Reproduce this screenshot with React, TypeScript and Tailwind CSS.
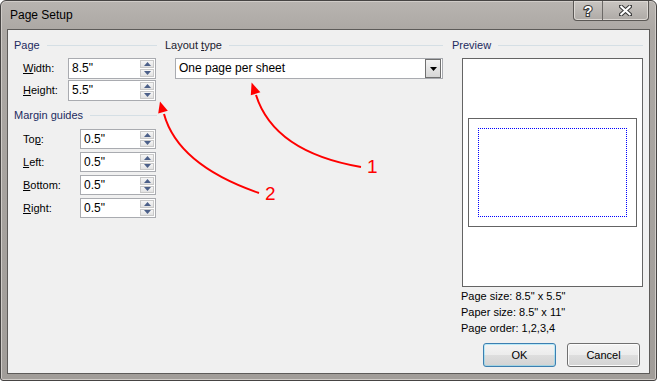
import React from "react"

function Spinner() {
  return (
    <div className="ml-auto flex h-full w-[15px] flex-col gap-px py-px pr-px">
      {["up", "down"].map((d) => (
        <div
          key={d}
          className="flex flex-1 items-center justify-center border border-[#c9c9c9] bg-[linear-gradient(#f6f6f6,#e2e2e2)]"
        >
          <svg width="7" height="4" viewBox="0 0 7 4">
            {d === "up" ? (
              <path d="M0 4 L3.5 0 L7 4 Z" fill="#4c6089" />
            ) : (
              <path d="M0 0 L3.5 4 L7 0 Z" fill="#4c6089" />
            )}
          </svg>
        </div>
      ))}
    </div>
  )
}

function Field({ value, width, height }: { value: string; width: string; height: string }) {
  return (
    <div className={`flex items-center border border-[#a9abb0] bg-white ${width} ${height}`}>
      <span className="pl-[3px] text-[12px] text-black">{value}</span>
      <Spinner />
    </div>
  )
}

function GroupHeader({ children }: { children: React.ReactNode }) {
  return (
    <div className="flex h-[15px] items-center">
      <span className="text-[#1c2b60]">{children}</span>
      <div className="ml-[7px] h-px flex-1 bg-[#d5dfe5]" />
    </div>
  )
}

function Row({
  label,
  labelWidth,
  children,
}: {
  label: React.ReactNode
  labelWidth: string
  children: React.ReactNode
}) {
  return (
    <div className="flex items-center">
      <span className={`pl-[9px] text-black ${labelWidth}`}>{label}</span>
      {children}
    </div>
  )
}

function Button({ children, primary }: { children: React.ReactNode; primary?: boolean }) {
  return (
    <div
      className={`flex h-[24px] w-[73px] items-center justify-center rounded-[3px] border text-black bg-[linear-gradient(#f4f4f4,#ececec_50%,#dedede_50%,#d3d3d3)] ${
        primary
          ? "border-[#3c7fb1] shadow-[inset_0_0_0_1px_#48d6ff55]"
          : "border-[#707070] shadow-[inset_0_0_0_1px_#fcfcfc]"
      }`}
    >
      {children}
    </div>
  )
}

export default function App() {
  const margins = [
    { label: <>To<span className="underline">p</span>:</>, value: '0.5"' },
    { label: <><span className="underline">L</span>eft:</>, value: '0.5"' },
    { label: <><span className="underline">B</span>ottom:</>, value: '0.5"' },
    { label: <><span className="underline">R</span>ight:</>, value: '0.5"' },
  ]

  return (
    <div className="relative h-[381px] w-[657px] font-['Liberation_Sans',Arial,sans-serif] text-[11px] leading-[15px]">
      <div className="flex h-full w-full flex-col rounded-t-[6px] rounded-b-[3px] border border-[#464443] bg-[linear-gradient(#b8b4b0,#aca8a4_30px,#a19d99)] shadow-[inset_0_0_0_1px_#d0ccc8]">
        {/* title bar */}
        <div className="flex h-[28px] items-start">
          <span className="pl-[9px] pt-[7px] text-[12px] text-black">Page Setup</span>
          <div className="ml-auto mr-[7px] flex h-[20px] overflow-hidden rounded-b-[4px] border border-t-0 border-[#5b5855] bg-[linear-gradient(#c9c5c1,#aeaaa6)] shadow-[inset_0_0_0_1px_#dcd8d4]">
            <div className="flex w-[29px] items-center justify-center border-r border-[#6c6966]">
              <svg width="12" height="16" viewBox="0 0 12 16">
                <text
                  x="6"
                  y="13"
                  textAnchor="middle"
                  fontFamily="Liberation Sans, Arial, sans-serif"
                  fontWeight="bold"
                  fontSize="14"
                  fill="#fff"
                  stroke="#3a3a3a"
                  strokeWidth="2.2"
                  paintOrder="stroke"
                >
                  ?
                </text>
              </svg>
            </div>
            <div className="flex w-[45px] items-center justify-center">
              <svg width="13" height="11" viewBox="0 0 13 11">
                <path
                  d="M1.5 1 L11.5 10 M11.5 1 L1.5 10"
                  stroke="#3a3a3a"
                  strokeWidth="4.2"
                  strokeLinecap="round"
                />
                <path d="M1.5 1 L11.5 10 M11.5 1 L1.5 10" stroke="#fff" strokeWidth="2.2" />
              </svg>
            </div>
          </div>
        </div>

        {/* client area */}
        <div className="mx-[6px] mb-[6px] flex flex-1 border border-[#5d5b59] bg-[#f0f0f0] pl-[6px] pt-[8px]">
          {/* page column */}
          <div className="flex w-[143px] flex-col">
            <GroupHeader>Page</GroupHeader>
            <div className="mt-[5px] flex flex-col gap-px">
              <Row label={<><span className="underline">W</span>idth:</>} labelWidth="w-[54px]">
                <Field value={'8.5"'} width="w-[88px]" height="h-[21px]" />
              </Row>
              <Row label={<><span className="underline">H</span>eight:</>} labelWidth="w-[54px]">
                <Field value={'5.5"'} width="w-[88px]" height="h-[21px]" />
              </Row>
            </div>
            <div className="mt-[7px]">
              <GroupHeader>Margin guides</GroupHeader>
            </div>
            <div className="mt-[6px] flex flex-col gap-[3px]">
              {margins.map((m, i) => (
                <Row key={i} label={m.label} labelWidth="w-[66px]">
                  <Field value={m.value} width="w-[76px]" height="h-[20px]" />
                </Row>
              ))}
            </div>
          </div>

          {/* layout column */}
          <div className="ml-[8px] flex w-[278px] flex-col">
            <GroupHeader>
              <span className="text-[#1b1b2e]">
                Layout <span className="underline">t</span>ype
              </span>
            </GroupHeader>
            <div className="ml-[10px] mt-[5px] flex h-[21px] items-center border border-[#a9abb0] bg-white">
              <span className="pl-[3px] text-[12px] text-black">One page per sheet</span>
              <div className="ml-auto mr-px flex h-[19px] w-[16px] items-center justify-center border border-[#707070] bg-[linear-gradient(#f3f3f3,#d6d6d6)]">
                <svg width="7" height="4" viewBox="0 0 7 4">
                  <path d="M0 0 L3.5 4 L7 0 Z" fill="#000" />
                </svg>
              </div>
            </div>
          </div>

          {/* preview column */}
          <div className="ml-[9px] flex w-[191px] flex-col">
            <GroupHeader>Preview</GroupHeader>
            <div className="ml-[10px] mt-[5px] flex h-[229px] w-[181px] items-center justify-center border border-[#646464] bg-white">
              <div className="h-[109px] w-[169px] border border-[#646464] p-[9px]">
                <div className="h-full w-full border border-dotted border-[#0000ff]" />
              </div>
            </div>
            <div className="mt-px pl-[9px] leading-[16px] text-black">
              <div>Page size: 8.5" x 5.5"</div>
              <div>Paper size: 8.5" x 11"</div>
              <div>Page order: 1,2,3,4</div>
            </div>
            <div className="mt-[7px] flex justify-end gap-[11px] pr-[3px]">
              <Button primary>OK</Button>
              <Button>Cancel</Button>
            </div>
          </div>
        </div>
      </div>

      {/* red annotations */}
      <svg className="pointer-events-none absolute inset-0" width="657" height="381" viewBox="0 0 657 381">
        <path d="M361 167 Q 274 152 256 95" fill="none" stroke="#ff0000" strokeWidth="2" />
        <polygon points="251.6,82.5 260.4,92.3 250.8,95.2" fill="#ff0000" />
        <path d="M259 193 Q 178 165 164 114" fill="none" stroke="#ff0000" strokeWidth="2" />
        <polygon points="160,101.4 167.8,110.7 158.2,113.4" fill="#ff0000" />
      </svg>
      <span className="absolute left-[367px] top-[157px] text-[19px] leading-[19px] text-[#ff0000]">1</span>
      <span className="absolute left-[265px] top-[184px] text-[19px] leading-[19px] text-[#ff0000]">2</span>
    </div>
  )
}
